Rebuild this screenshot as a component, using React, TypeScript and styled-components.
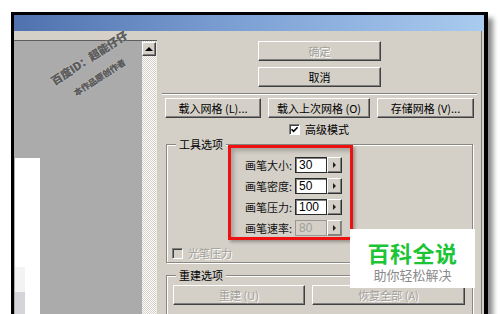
import React from "react";
import styled, { createGlobalStyle } from "styled-components";

const GlobalStyle = createGlobalStyle`
  html, body {
    margin: 0;
    padding: 0;
    background: #ffffff;
    overflow: hidden;
  }
  body {
    font-family: "Noto Sans CJK SC", "DejaVu Sans", sans-serif;
  }
`;

const App = () => {
  return (
    <Stage>
      <GlobalStyle />
      <Window>
        <TitleBar />
        <WindowBody>
          <LeftPane>
            <ViewRow>
              <Canvas>
                <Sheet>
                  <Swatch $h={25} $color="#f3f3f3" />
                  <Swatch $h={24} $color="#d4d4d9" />
                  <Swatch $h={8} $color="#b4b4b8" />
                </Sheet>
              </Canvas>
              <ScrollTrack>
                <ScrollButton>
                  <UpArrow />
                </ScrollButton>
              </ScrollTrack>
            </ViewRow>
          </LeftPane>

          <RightPanel>
            <TopButtons>
              <Button $w={123} $disabled>
                确定
              </Button>
              <Button $w={123}>取消</Button>
            </TopButtons>
            <Separator />
            <ButtonRow>
              <Button $w={96}>载入网格 (L)...</Button>
              <Button $w={102}>载入上次网格 (O)</Button>
              <Button $w={97}>存储网格 (V)...</Button>
            </ButtonRow>
            <CheckRow $left={132} $top={5}>
              <CheckBox>
                <CheckMark viewBox="0 0 9 9">
                  <path d="M1.5 4.2 L3.6 6.3 L7.6 2.2" />
                </CheckMark>
              </CheckBox>
              <CheckLabel>高级模式</CheckLabel>
            </CheckRow>

            <GroupBox $top={9} $height={119}>
              <GroupLegend>工具选项</GroupLegend>
              <RedFrame>
                <ParamRow>
                  <ParamLabel>画笔大小:</ParamLabel>
                  <ParamInput>30</ParamInput>
                  <StepButton>
                    <RightArrow />
                  </StepButton>
                </ParamRow>
                <ParamRow>
                  <ParamLabel>画笔密度:</ParamLabel>
                  <ParamInput>50</ParamInput>
                  <StepButton>
                    <RightArrow />
                  </StepButton>
                </ParamRow>
                <ParamRow>
                  <ParamLabel>画笔压力:</ParamLabel>
                  <ParamInput>100</ParamInput>
                  <StepButton>
                    <RightArrow />
                  </StepButton>
                </ParamRow>
                <ParamRow>
                  <ParamLabel>画笔速率:</ParamLabel>
                  <ParamInput $disabled>80</ParamInput>
                  <StepButton $disabled>
                    <RightArrow />
                  </StepButton>
                </ParamRow>
              </RedFrame>
              <CheckRow $left={5} $top={7}>
                <CheckBox $disabled />
                <CheckLabel $disabled>光笔压力</CheckLabel>
              </CheckRow>
            </GroupBox>

            <GroupBox $top={12} $height={60}>
              <GroupLegend>重建选项</GroupLegend>
              <GroupButtons>
                <Button $w={132} $disabled>
                  重建 (U)
                </Button>
                <Button $w={153} $disabled>
                  恢复全部 (A)
                </Button>
              </GroupButtons>
            </GroupBox>
          </RightPanel>
        </WindowBody>
      </Window>

      <WatermarkLine $x={89} $y={58} $size={11}>
        百度ID：超能仔仔
      </WatermarkLine>
      <WatermarkLine $x={99} $y={77} $size={8.5}>
        本作品原创作者
      </WatermarkLine>

      <BrandBadge>
        <BrandTitle>百科全说</BrandTitle>
        <BrandSub>助你轻松解决</BrandSub>
      </BrandBadge>
    </Stage>
  );
};

export default App;

const Stage = styled.div`
  position: relative;
  box-sizing: border-box;
  width: 500px;
  height: 314px;
  padding: 12px 0 0 11px;
  overflow: hidden;
`;

const Window = styled.div`
  box-sizing: border-box;
  display: flex;
  flex-direction: column;
  width: 477px;
  height: 312px;
  border-top: 3px solid #000;
  border-left: 3px solid #000;
  border-right: 4px solid #000;
  box-shadow: 5px 6px 5px rgba(0, 0, 0, 0.45);
`;

const TitleBar = styled.div`
  height: 16px;
  background: linear-gradient(to right, #4f71ae, #7fa2d6 50%, #a9cbef);
`;

const WindowBody = styled.div`
  display: flex;
  flex: 1;
  min-height: 0;
  background: #d4d0c8;
`;

const LeftPane = styled.div`
  display: flex;
  flex-direction: column;
  width: 143px;
  padding-top: 9px;
`;

const ViewRow = styled.div`
  display: flex;
  flex: 1;
  border-top: 1px solid #5e5e5e;
`;

const Canvas = styled.div`
  display: flex;
  flex-direction: column;
  width: 129px;
  padding-top: 117px;
  background: #ababab;
`;

const WatermarkLine = styled.div<{ $x: number; $y: number; $size: number }>`
  position: absolute;
  left: ${(p) => p.$x}px;
  top: ${(p) => p.$y}px;
  width: max-content;
  transform: translate(-50%, -50%) rotate(-33deg);
  white-space: nowrap;
  font-size: ${(p) => p.$size}px;
  line-height: 1.2;
  font-weight: 700;
  color: #5c5c5c;
  text-shadow: 0.5px 0 0 #5c5c5c, 0 0 2px #d0d0d0;
`;

const Sheet = styled.div`
  display: flex;
  flex-direction: column;
  justify-content: flex-end;
  flex: 1;
  width: 25px;
  margin-left: 1px;
  background: #ffffff;
`;

const Swatch = styled.div<{ $h: number; $color: string }>`
  width: 10px;
  height: ${(p) => p.$h}px;
  background: ${(p) => p.$color};
`;

const ScrollTrack = styled.div`
  width: 14px;
  padding-top: 1px;
  background-color: #ffffff;
  background-image: repeating-conic-gradient(#d4d0c8 0 25%, #ffffff 0 50%);
  background-size: 2px 2px;
  border-right: 1px solid #ece9e2;
`;

const ScrollButton = styled.div`
  box-sizing: border-box;
  display: flex;
  align-items: center;
  justify-content: center;
  width: 14px;
  height: 14px;
  background: #d4d0c8;
  border-top: 1px solid #fff;
  border-left: 1px solid #fff;
  border-right: 1px solid #404040;
  border-bottom: 1px solid #404040;
  box-shadow: inset -1px -1px 0 #808080;
`;

const UpArrow = styled.div`
  width: 0;
  height: 0;
  border-left: 4px solid transparent;
  border-right: 4px solid transparent;
  border-bottom: 4px solid #000;
`;

const RightPanel = styled.div`
  display: flex;
  flex-direction: column;
  flex: 1;
  padding-top: 10px;
  overflow: hidden;
  box-shadow: inset -2px 0 0 #d4d0c8, inset -3px 0 0 #7c7c7c;
`;

const TopButtons = styled.div`
  display: flex;
  flex-direction: column;
  gap: 6px;
  margin-left: 101px;
`;

const Button = styled.div<{ $w: number; $disabled?: boolean }>`
  box-sizing: border-box;
  display: flex;
  align-items: center;
  justify-content: center;
  width: ${(p) => p.$w}px;
  height: 20px;
  background: #d4d0c8;
  border-top: 1px solid #ffffff;
  border-left: 1px solid #ffffff;
  border-right: 1px solid #404040;
  border-bottom: 1px solid #404040;
  box-shadow: inset -1px -1px 0 #808080;
  font-size: 11px;
  white-space: nowrap;
  color: ${(p) => (p.$disabled ? "#a29f99" : "#000000")};
  text-shadow: ${(p) => (p.$disabled ? "1px 1px 0 #ffffff" : "none")};
`;

const Separator = styled.div`
  width: 315px;
  margin: 6px 0 0 5px;
  border-top: 1px solid #808080;
  border-bottom: 1px solid #ffffff;
`;

const ButtonRow = styled.div`
  display: flex;
  gap: 7px;
  margin: 3px 0 0 8px;
`;

const CheckRow = styled.div<{ $left: number; $top: number }>`
  display: flex;
  align-items: center;
  gap: 5px;
  height: 12px;
  margin: ${(p) => p.$top}px 0 0 ${(p) => p.$left}px;
`;

const CheckBox = styled.div<{ $disabled?: boolean }>`
  box-sizing: border-box;
  display: flex;
  align-items: center;
  justify-content: center;
  width: 11px;
  height: 11px;
  background: ${(p) => (p.$disabled ? "#d4d0c8" : "#ffffff")};
  border-top: 1px solid #808080;
  border-left: 1px solid #808080;
  border-right: 1px solid #ffffff;
  border-bottom: 1px solid #ffffff;
  box-shadow: inset 1px 1px 0 #404040;
`;

const CheckMark = styled.svg`
  width: 9px;
  height: 9px;
  fill: none;
  stroke: #000;
  stroke-width: 1.6;
`;

const CheckLabel = styled.span<{ $disabled?: boolean }>`
  font-size: 11px;
  line-height: 12px;
  color: ${(p) => (p.$disabled ? "#a29f99" : "#000000")};
  text-shadow: ${(p) => (p.$disabled ? "1px 1px 0 #ffffff" : "none")};
`;

const GroupBox = styled.div<{ $top: number; $height: number }>`
  position: relative;
  flex-shrink: 0;
  box-sizing: border-box;
  width: 307px;
  height: ${(p) => p.$height}px;
  margin: ${(p) => p.$top}px 0 0 9px;
  border: 1px solid #8a8780;
  box-shadow: 1px 1px 0 #ffffff, inset 1px 1px 0 #ffffff;
`;

const GroupLegend = styled.div`
  position: absolute;
  top: -8px;
  left: 9px;
  padding: 0 3px;
  background: #d4d0c8;
  font-size: 11px;
  line-height: 15px;
  color: #000;
`;

const RedFrame = styled.div`
  box-sizing: border-box;
  display: flex;
  flex-direction: column;
  gap: 5px;
  width: 125px;
  height: 95px;
  margin-left: 61px;
  padding: 9px 8px 0 14px;
  border: 3px solid #ee1111;
  box-shadow: inset 3px 3px 4px rgba(0, 0, 0, 0.22), 2px 2px 3px rgba(0, 0, 0, 0.3);
`;

const ParamRow = styled.div`
  display: flex;
  align-items: center;
  height: 16px;
`;

const ParamLabel = styled.span`
  width: 50px;
  font-size: 11px;
  line-height: 14px;
  white-space: nowrap;
  color: #111;
`;

const ParamInput = styled.div<{ $disabled?: boolean }>`
  box-sizing: border-box;
  width: 32px;
  height: 16px;
  padding-left: 3px;
  background: ${(p) => (p.$disabled ? "#d4d0c8" : "#ffffff")};
  border: 1px solid ${(p) => (p.$disabled ? "#9a9791" : "#2a2a2a")};
  box-shadow: ${(p) => (p.$disabled ? "none" : "inset 1px 1px 0 #808080")};
  font-family: "Liberation Sans", Arial, sans-serif;
  font-size: 12px;
  line-height: 14px;
  color: ${(p) => (p.$disabled ? "#a29f99" : "#000000")};
`;

const StepButton = styled.div<{ $disabled?: boolean }>`
  box-sizing: border-box;
  display: flex;
  align-items: center;
  justify-content: center;
  width: 15px;
  height: 16px;
  background: #d4d0c8;
  border-top: 1px solid #ffffff;
  border-left: 1px solid #ffffff;
  border-right: 1px solid ${(p) => (p.$disabled ? "#8a8780" : "#303030")};
  border-bottom: 1px solid ${(p) => (p.$disabled ? "#8a8780" : "#303030")};
  box-shadow: inset -1px -1px 0 #808080;
`;

const RightArrow = styled.div`
  width: 0;
  height: 0;
  border-top: 3px solid transparent;
  border-bottom: 3px solid transparent;
  border-left: 3px solid #202020;
`;

const GroupButtons = styled.div`
  display: flex;
  gap: 7px;
  margin: 9px 0 0 6px;
`;

const BrandBadge = styled.div`
  position: absolute;
  left: 350px;
  top: 229px;
  box-sizing: border-box;
  display: flex;
  flex-direction: column;
  align-items: center;
  width: 125px;
  height: 59px;
  padding-top: 11px;
  background: #ffffff;
`;

const BrandTitle = styled.div`
  font-size: 22px;
  line-height: 25px;
  font-weight: 700;
  letter-spacing: 0.5px;
  color: #1dc436;
`;

const BrandSub = styled.div`
  margin-top: 2px;
  font-size: 13px;
  line-height: 15px;
  color: #8a8a8a;
`;
